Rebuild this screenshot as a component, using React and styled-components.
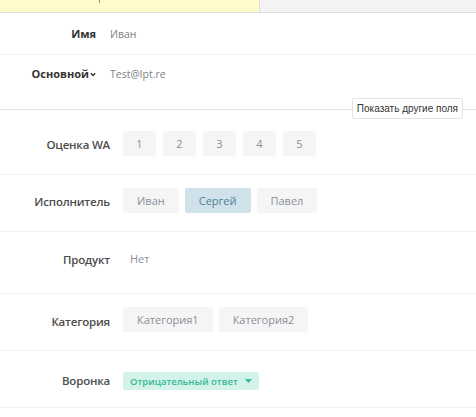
import React from "react";
import styled, { createGlobalStyle } from "styled-components";

const Global = createGlobalStyle`
  body {
    margin: 0;
    background: #fff;
    font-family: "Open Sans", "Liberation Sans", sans-serif;
  }
`;

const Page = styled.div`
  width: 476px;
  height: 417px;
  overflow: hidden;
  background: #fff;
`;

const TopBar = styled.div`
  display: flex;
  height: 12px;
  border-bottom: 1px solid #dcdcdc;
`;

const Note = styled.div`
  position: relative;
  width: 259px;
  background: #fffcc9;
  border-right: 1px solid #dedede;

  &::after {
    content: "";
    position: absolute;
    left: 99px;
    top: 0;
    width: 1px;
    height: 3px;
    background: #8a8a8a;
  }
`;

const Tabs = styled.div`
  flex: 1;
  background: #f3f3f3;
`;

const Contact = styled.div`
  display: grid;
  grid-template-columns: 96px 1fr;
  column-gap: 14px;
  align-items: start;
  height: ${(p) => p.$h}px;
  padding-top: ${(p) => p.$pt}px;
  box-sizing: border-box;
  border-bottom: 1px solid ${(p) => p.$line || "#f1f1f1"};
  position: relative;
`;

const SmallLabel = styled.div`
  font-size: 11px;
  font-weight: 700;
  color: #333;
  line-height: 16px;
  display: flex;
  justify-content: flex-end;
  align-items: center;
  gap: 1px;
`;

const SmallValue = styled.div`
  font-size: 10.5px;
  color: #7f7f7f;
  line-height: 16px;
`;

const MoreButton = styled.button`
  position: absolute;
  right: 13px;
  bottom: -10px;
  height: 21px;
  padding: 0 4px;
  background: #fff;
  border: 1px solid #e3e3e3;
  border-radius: 2px;
  font-family: "Liberation Sans", Arial, sans-serif;
  font-size: 10px;
  color: #333;
`;

const Row = styled.div`
  display: grid;
  grid-template-columns: 110px 1fr;
  column-gap: 13px;
  align-items: start;
  height: ${(p) => p.$h}px;
  padding-top: ${(p) => p.$pt}px;
  box-sizing: border-box;
  border-bottom: 1px solid #f1f1f1;
`;

const Label = styled.div`
  text-align: right;
  font-size: 11.5px;
  letter-spacing: -0.2px;
  font-weight: 600;
  color: #4d4d4d;
  padding-top: ${(p) => p.$off || 0}px;
  line-height: 18px;
`;

const Options = styled.div`
  display: flex;
  gap: ${(p) => p.$gap || 6}px;
`;

const Option = styled.div`
  height: 25px;
  min-width: ${(p) => p.$w || 0}px;
  padding: 0 ${(p) => (p.$w ? 0 : 14)}px;
  box-sizing: border-box;
  display: flex;
  align-items: center;
  justify-content: center;
  border-radius: 2px;
  font-size: 11px;
  background: ${(p) => (p.$active ? "#cfe2ea" : "#f5f5f5")};
  color: ${(p) => (p.$active ? "#4d8194" : "#8a8f99")};
`;

const Plain = styled.div`
  font-size: 11px;
  color: #8a8f99;
  padding-left: 7px;
  line-height: 18px;
`;

const Funnel = styled.div`
  display: flex;
`;

const Badge = styled.div`
  display: flex;
  align-items: center;
  gap: 7px;
  height: 18px;
  padding: 0 7px;
  background: #d3f2ea;
  border-radius: 3px;
  font-size: 9.5px;
  font-weight: 600;
  color: #35b993;
`;

const Caret = () => (
  <svg width="7" height="4" viewBox="0 0 7 4">
    <path d="M0 0h7L3.5 4z" fill="#35b993" />
  </svg>
);

const Chevron = () => (
  <svg width="6" height="5" viewBox="0 0 6 5">
    <path d="M0.8 1.2L3 3.4L5.2 1.2" stroke="#333" strokeWidth="1.4" fill="none" />
  </svg>
);

export default function App() {
  return (
    <Page>
      <Global />
      <TopBar>
        <Note />
        <Tabs />
      </TopBar>

      <Contact $h={42} $pt={13}>
        <SmallLabel>Имя</SmallLabel>
        <SmallValue>Иван</SmallValue>
      </Contact>
      <Contact $h={55} $pt={11} $line="#e4e4e4">
        <SmallLabel>
          Основной
          <Chevron />
        </SmallLabel>
        <SmallValue>Test@lpt.re</SmallValue>
        <MoreButton>Показать другие поля</MoreButton>
      </Contact>

      <Row $h={65} $pt={21}>
        <Label $off={5}>Оценка WA</Label>
        <Options $gap={7}>
          {[1, 2, 3, 4, 5].map((n) => (
            <Option key={n} $w={33}>
              {n}
            </Option>
          ))}
        </Options>
      </Row>

      <Row $h={57} $pt={13}>
        <Label $off={5}>Исполнитель</Label>
        <Options>
          <Option>Иван</Option>
          <Option $active>Сергей</Option>
          <Option>Павел</Option>
        </Options>
      </Row>

      <Row $h={62} $pt={18}>
        <Label $off={1}>Продукт</Label>
        <Plain>Нет</Plain>
      </Row>

      <Row $h={57} $pt={13}>
        <Label $off={6}>Категория</Label>
        <Options>
          <Option>Категория1</Option>
          <Option>Категория2</Option>
        </Options>
      </Row>

      <Row $h={57} $pt={21}>
        <Label $off={-2}>Воронка</Label>
        <Funnel>
          <Badge>
            Отрицательный ответ
            <Caret />
          </Badge>
        </Funnel>
      </Row>
    </Page>
  );
}
